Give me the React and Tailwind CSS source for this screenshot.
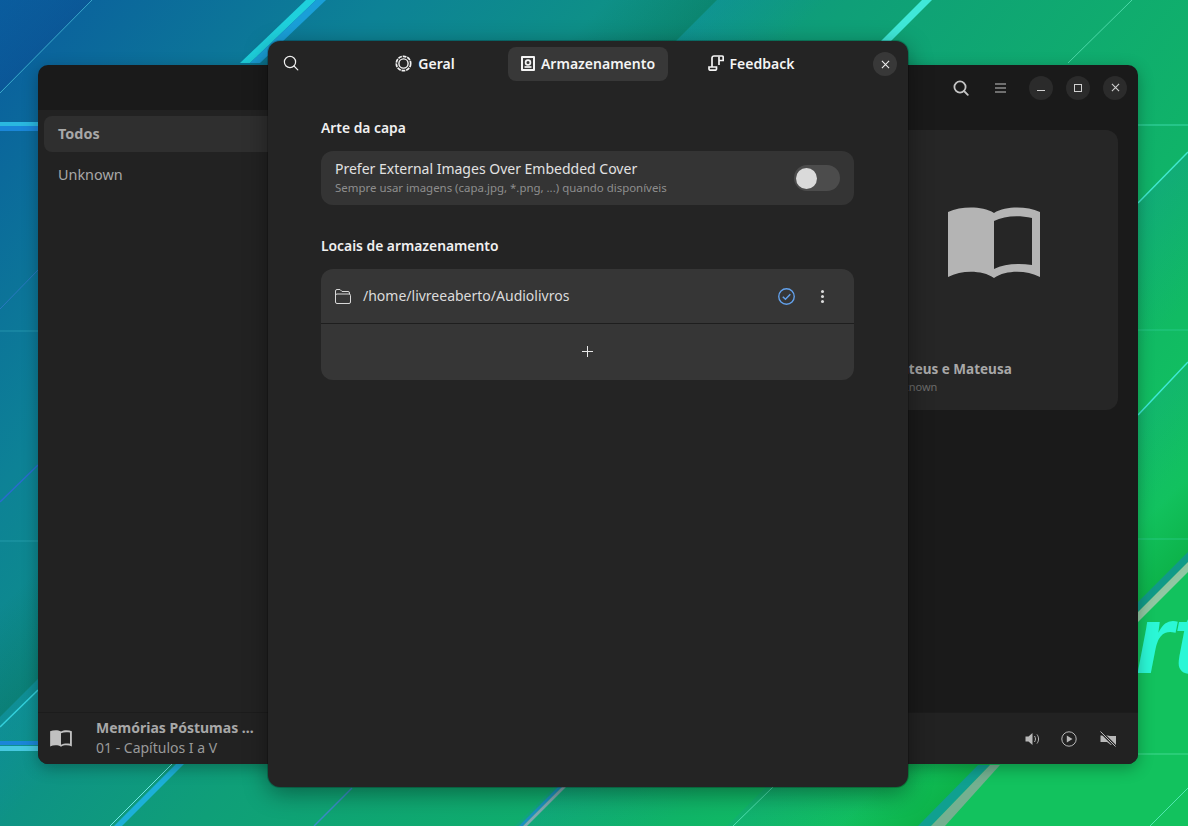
import React from 'react'

// soft shading next to a 45deg wallpaper edge, edge is the line x + y = c
function Shade({ id, c, w, color, opacity }) {
  const c2 = c + w
  return (
    <>
      <linearGradient id={id} gradientUnits="userSpaceOnUse" x1={c / 2} y1={c / 2} x2={c2 / 2} y2={c2 / 2}>
        <stop offset="0" stopColor={color} stopOpacity={opacity} />
        <stop offset="1" stopColor={color} stopOpacity="0" />
      </linearGradient>
      <path d={`M${c} 0 L${c2} 0 L0 ${c2} L0 ${c}Z`} fill={`url(#${id})`} />
    </>
  )
}

function Wallpaper() {
  return (
    <svg className="absolute inset-0" width="1188" height="826" viewBox="0 0 1188 826">
      <defs>
        <linearGradient id="wall" x1="0" y1="0" x2="1" y2="0.55">
          <stop offset="0" stopColor="#0a5c9e" />
          <stop offset="0.25" stopColor="#0d8296" />
          <stop offset="0.55" stopColor="#0f9f78" />
          <stop offset="0.85" stopColor="#10b468" />
          <stop offset="1" stopColor="#12c25e" />
        </linearGradient>
      </defs>
      <rect width="1188" height="826" fill="url(#wall)" />
      <Shade id="s1" c={717} w={-110} color="#05604a" opacity="0.3" />
      <Shade id="s2" c={717} w={110} color="#1090a8" opacity="0.4" />
      <Shade id="s3" c={1754} w={-90} color="#06a030" opacity="0.5" />
      <Shade id="s4" c={1341} w={150} color="#1890b0" opacity="0.2" />
      <Shade id="s5" c={1553} w={120} color="#1890b0" opacity="0.15" />
      <Shade id="s6" c={92} w={-92} color="#0a3f8e" opacity="0.35" />

      <path d="M0 93 L92 0" stroke="#3aa6c8" strokeWidth="1" />
      <path d="M0 309 L38 270" stroke="#2a78c0" strokeWidth="1" />
      <path d="M0 502 L38 465" stroke="#2a6cd0" strokeWidth="1.5" />
      <path d="M0 727 L38 690" stroke="#34d0dc" strokeWidth="1.5" />
      <path d="M240 63 L306 0 L316 0 L250 63Z" fill="#1fd0dc" />
      <path d="M250 63 L316 0 L326 0 L260 63Z" fill="#1a9fd8" />
      <path d="M880 42 L922 0 L932 0 L890 42Z" fill="#3fe8d8" />
      <path d="M1068 63 L1132 0" stroke="#4cd8a8" strokeWidth="1" />
      <path d="M0 122 H38 V126 H0Z" fill="#2ab8e0" />
      <path d="M0 126 H38 V131 H0Z" fill="#1a86d8" />
      <path d="M0 331 H38" stroke="#3ab0c0" strokeOpacity="0.5" />
      <path d="M0 541 H38" stroke="#3ab0c0" strokeOpacity="0.5" />
      <path d="M0 741 H38 V745 H0Z" fill="#1a86d8" />
      <path d="M0 746 H38 V751 H0Z" fill="#46c8e0" />

      <path d="M110 826 L172 764" stroke="#70e8e8" strokeWidth="1" />
      <path d="M114 826 L176 764 L184 764 L122 826Z" fill="#1cb0d8" />
      <path d="M314 826 L352 788" stroke="#3a8cc8" strokeWidth="1.5" />
      <path d="M519 826 L558 787 L562 787 L523 826Z" fill="#1a90c0" />
      <path d="M523 826 L562 787 L566 787 L527 826Z" fill="#80a8b0" />
      <path d="M733 826 L773 787" stroke="#50e0b0" strokeWidth="1" />
      <path d="M918 826 L978 765 L990 765 L931 826Z" fill="#10a090" />
      <path d="M931 826 L990 765 L1000 765 L945 826Z" fill="#74b090" />
      <path d="M1150 826 L1188 788" stroke="#50e8b0" strokeWidth="1" />

      <path d="M1138 125 H1188" stroke="#3ad8a8" strokeWidth="1" />
      <path d="M1138 203 L1188 152" stroke="#40e8d0" strokeWidth="1.5" />
      <path d="M1138 330 H1188" stroke="#3ad8a8" strokeOpacity="0.5" />
      <path d="M1138 415 L1188 362" stroke="#3fe8d8" strokeWidth="1.5" />
      <path d="M1138 539 H1188" stroke="#3ad8a8" strokeOpacity="0.5" />
      <path d="M1138 754 H1188" stroke="#40d890" strokeWidth="1" />

      <text x="1136" y="673" fill="#2bf7d6" fontFamily="'Liberation Sans', sans-serif" fontSize="96" fontWeight="700" fontStyle="italic">rt</text>
      <path d="M1138 602 L1188 552 V562 L1138 612Z" fill="#109a88" />
      <path d="M1138 612 L1188 562 V572 L1138 622Z" fill="#a8c8b0" fillOpacity="0.85" />
    </svg>
  )
}

function BookIcon({ className }) {
  return (
    <svg className={className} viewBox="0 0 92 72" fill="none">
      <path fillRule="evenodd" clipRule="evenodd" fill="currentColor" d="M0 5 C14 -1 34 -1 46 6 C58 -1 78 -1 92 5 V70 C78 63 58 63 46 71 C34 63 14 63 0 70 Z M46 14 V62 C56 57 70 56 84 58 V11 C70 8 56 9 46 14 Z" />
    </svg>
  )
}

function SearchIcon({ size = 16, strokeWidth = 1.3 }) {
  return (
    <svg width={size} height={size} viewBox="0 0 16 16" fill="none" stroke="currentColor" strokeWidth={strokeWidth}>
      <circle cx="7" cy="7" r="5.6" />
      <path d="M11 11 L14.8 14.8" strokeLinecap="round" />
    </svg>
  )
}

function CloseIcon({ size = 10 }) {
  return (
    <svg width={size} height={size} viewBox="0 0 10 10" fill="none" stroke="currentColor" strokeWidth="1.2">
      <path d="M1 1 L9 9 M9 1 L1 9" />
    </svg>
  )
}

function WinButton({ children }) {
  return (
    <button className="w-6 h-6 rounded-full bg-[#2b2b2b] flex items-center justify-center text-[#d0d0d0]">
      {children}
    </button>
  )
}

function Library() {
  return (
    <div className="absolute left-[38px] top-[65px] w-[1100px] h-[699px] rounded-[10px] overflow-hidden bg-[#1a1a1a] flex flex-col shadow-[0_4px_16px_rgba(0,0,0,0.3)]">
      <div className="h-[45px] shrink-0 flex items-center justify-end pr-[11px] text-[#c4c4c4]">
        <span className="mr-[26px]"><SearchIcon size={16} strokeWidth={1.8} /></span>
        <svg className="mr-[23px]" width="11" height="10" viewBox="0 0 11 10" stroke="currentColor" strokeWidth="1">
          <path d="M0 1 H11 M0 5 H11 M0 9 H11" />
        </svg>
        <div className="flex gap-[13px]">
          <WinButton><span className="block w-2 h-px bg-[#d0d0d0] mt-[6px]" /></WinButton>
          <WinButton><span className="block w-2 h-2 border border-[#d0d0d0]" /></WinButton>
          <WinButton><CloseIcon size={9} /></WinButton>
        </div>
      </div>
      <div className="flex-1 flex min-h-0">
        <aside className="w-[260px] bg-[#222222] p-[6px] text-[14.4px] text-[#a8a8a8]">
          <div className="h-9 rounded-lg bg-[#2f2f2f] flex items-center pl-[14px] font-bold">Todos</div>
          <div className="h-9 mt-[5px] flex items-center pl-[14px]">Unknown</div>
        </aside>
        <main className="flex-1 flex justify-end pt-5 pr-5">
          <div className="w-[248px] h-[280px] rounded-xl bg-[#262626] flex flex-col">
            <div className="h-[229px] pt-[77px] flex justify-center text-[#b4b4b4]">
              <BookIcon className="w-[92px] h-[72px]" />
            </div>
            <div className="pl-[18px] text-[13.5px] font-bold text-[#a8a8a8] leading-5 whitespace-nowrap">Mateus e Mateusa</div>
            <div className="pl-[18px] text-[11px] text-[#6c6c6c] leading-4">Unknown</div>
          </div>
        </main>
      </div>
      <div className="h-[52px] shrink-0 bg-[#222222] border-t border-[#1c1c1c] flex items-center text-[#b0b0b0]">
        <BookIcon className="w-[22px] h-[17px] ml-3 text-[#c0c0c0]" />
        <div className="ml-[24px] w-[165px] pb-[2px]">
          <div className="text-[14px] font-bold leading-5 whitespace-nowrap text-[#a8a8a8]">Memórias Póstumas ...</div>
          <div className="text-[14px] leading-5 text-[#9a9a9a] whitespace-nowrap">01 - Capítulos I a V</div>
        </div>
        <div className="ml-auto flex items-center pr-[22px] text-[#b8b8b8]">
          <svg width="15" height="16" viewBox="0 0 15 16" fill="none">
            <path d="M0.5 5.5 H3.5 L7.5 2 V14 L3.5 10.5 H0.5Z" fill="currentColor" />
            <path d="M9.5 5 C10.8 7 10.8 9 9.5 11 M12 3.5 C14.1 6.5 14.1 9.5 12 12.5" stroke="currentColor" strokeWidth="1" />
          </svg>
          <svg className="ml-[21px]" width="16" height="16" viewBox="0 0 16 16" fill="none">
            <circle cx="8" cy="8" r="7.2" stroke="currentColor" strokeWidth="1" />
            <path d="M5.8 4.5 L11.5 8 L5.8 11.5Z" fill="currentColor" />
          </svg>
          <svg className="ml-[23px]" width="16" height="16" viewBox="0 0 16 16" fill="none">
            <path d="M0.5 4.5 H7.5 L10 5 H16 V14 H11 L7 11 H0.5Z" fill="currentColor" />
            <path d="M0.5 0.5 L15.5 15.5" stroke="#222222" strokeWidth="3" />
            <path d="M0.5 0.5 L15.5 15.5" stroke="currentColor" strokeWidth="1" />
          </svg>
        </div>
      </div>
    </div>
  )
}

function Tab({ active, label, icon, className }) {
  return (
    <div className={`h-[34px] w-40 rounded-lg pb-[2px] flex items-center justify-center gap-[6px] text-[14px] font-semibold text-[#f4f4f4] ${active ? 'bg-[#383838]' : ''} ${className || ''}`}>
      {icon}
      <span>{label}</span>
    </div>
  )
}

function GearIcon() {
  return (
    <svg width="17" height="17" viewBox="0 0 17 17" fill="none" stroke="currentColor">
      <circle cx="8.5" cy="8.5" r="4.6" strokeWidth="1.4" />
      <circle cx="8.5" cy="8.5" r="7.2" strokeWidth="1.7" strokeDasharray="3.8 0.9" />
    </svg>
  )
}

function StorageIcon() {
  return (
    <svg width="14" height="15" viewBox="0 0 14 15" fill="none">
      <path fillRule="evenodd" clipRule="evenodd" fill="currentColor" d="M1 0 H13 A1 1 0 0 1 14 1 V14 A1 1 0 0 1 13 15 H1 A1 1 0 0 1 0 14 V1 A1 1 0 0 1 1 0Z M2 2 V13 H12 V2Z" />
      <circle cx="7" cy="6.5" r="2.4" stroke="currentColor" strokeWidth="1.7" />
      <path d="M3.5 11 H10.5" stroke="currentColor" strokeWidth="1.7" />
    </svg>
  )
}

function ScrollIcon() {
  return (
    <svg width="16" height="16" viewBox="0 0 16 16" fill="none" stroke="currentColor" strokeWidth="1.7">
      <path d="M1 12 H8.5 V14 A1.2 1.2 0 0 1 7.3 15.2 H2 A1.2 1.2 0 0 1 1 14 Z" />
      <path d="M4 12 V3 A2 2 0 0 1 6 1 H14 A1.2 1.2 0 0 1 15.2 2.2 V5.5 H11" />
      <path d="M11 1.5 V10" />
    </svg>
  )
}

function SectionTitle({ children, className }) {
  return <h2 className={`text-[13.85px] font-semibold leading-5 text-[#f0f0f0] ${className || ''}`}>{children}</h2>
}

function PrefsDialog() {
  return (
    <div className="absolute left-[268px] top-[41px] w-[640px] h-[746px] rounded-xl bg-[#242424] shadow-[0_6px_24px_rgba(0,0,0,0.4)] ring-1 ring-black/20">
      <header className="h-[44px] flex items-center relative top-[1px] pl-[15px] pr-[11px] text-[#f0f0f0]">
        <span className="w-5 pb-[2px]"><SearchIcon size={16} strokeWidth={1.2} /></span>
        <div className="flex-1 flex justify-center">
          <Tab label="Geral" icon={<GearIcon />} className="pr-[6px]" />
          <Tab active label="Armazenamento" icon={<StorageIcon />} />
          <Tab label="Feedback" icon={<ScrollIcon />} className="pl-[6px]" />
        </div>
        <button className="w-6 h-6 rounded-full bg-[#383838] flex items-center justify-center">
          <CloseIcon size={9} />
        </button>
      </header>
      <div className="pl-[53px] pr-[54px] pt-[33px]">
        <SectionTitle>Arte da capa</SectionTitle>
        <div className="mt-[13px] h-[54px] rounded-xl bg-[#343434] flex items-center pl-[14px] pr-[14px]">
          <div className="flex-1 pb-[1px]">
            <div className="text-[14px] leading-[19px] mb-[2px] text-[#e2e2e2]">Prefer External Images Over Embedded Cover</div>
            <div className="text-[11.45px] leading-[16px] text-[#8e8e8e]">Sempre usar imagens (capa.jpg, *.png, ...) quando disponíveis</div>
          </div>
          <div className="w-[46px] h-[26px] rounded-full bg-[#4c4c4c] flex items-center pl-[2px]">
            <span className="block w-[21px] h-[21px] rounded-full bg-[#dadada]" />
          </div>
        </div>
        <SectionTitle className="mt-[31px]">Locais de armazenamento</SectionTitle>
        <div className="mt-[13px] rounded-xl bg-[#363636] overflow-hidden">
          <div className="h-[54px] flex items-center pl-[14px] pr-[30px] border-b border-[#1e1e1e] box-content">
            <svg width="16" height="15" viewBox="0 0 16 15" fill="none" stroke="#d8d8d8" strokeWidth="1">
              <path d="M0.5 12.5 V2 A1.5 1.5 0 0 1 2 0.5 H5 L7 2.5 H13 A1.5 1.5 0 0 1 14.5 4 V5 M0.5 6.5 A1.5 1.5 0 0 1 2 5 H14 A1.5 1.5 0 0 1 15.5 6.5 V13 A1.5 1.5 0 0 1 14 14.5 H2 A1.5 1.5 0 0 1 0.5 13Z" />
            </svg>
            <span className="ml-[12px] flex-1 text-[14px] leading-5 pb-[1px] text-[#dcdcdc]">/home/livreeaberto/Audiolivros</span>
            <svg width="17" height="17" viewBox="0 0 16 16" fill="none" stroke="#62a0ea" strokeWidth="1.3">
              <circle cx="8" cy="8" r="7.3" />
              <path d="M4.5 8.2 L7 10.6 L11.6 5.8" strokeWidth="1.4" />
            </svg>
            <span className="ml-[26px] flex flex-col gap-[2px]">
              <span className="block w-[3px] h-[3px] bg-[#dcdcdc] rounded-full" />
              <span className="block w-[3px] h-[3px] bg-[#dcdcdc] rounded-full" />
              <span className="block w-[3px] h-[3px] bg-[#dcdcdc] rounded-full" />
            </span>
          </div>
          <div className="h-[56px] pb-[2px] flex items-center justify-center">
            <svg width="11" height="11" viewBox="0 0 11 11" stroke="#e8e8e8" strokeWidth="1">
              <path d="M5.5 0 V11 M0 5.5 H11" />
            </svg>
          </div>
        </div>
      </div>
    </div>
  )
}

export default function App() {
  return (
    <div className="relative w-[1188px] h-[826px] overflow-hidden font-['Noto_Sans','Open_Sans',sans-serif]">
      <Wallpaper />
      <Library />
      <PrefsDialog />
    </div>
  )
}
